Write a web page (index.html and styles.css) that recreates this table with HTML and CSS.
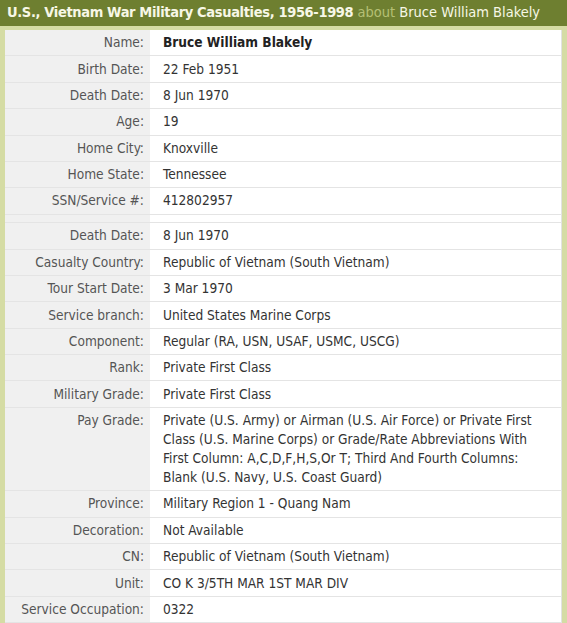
FILE: index.html
```html
<!DOCTYPE html>
<html>
<head>
<meta charset="utf-8">
<link rel="stylesheet" href="styles.css">
</head>
<body>
<div class="page">
  <h1 class="title"><span class="coll">U.S., Vietnam War Military Casualties, 1956-1998</span> <span class="about">about</span> <span class="person">Bruce William Blakely</span></h1>
  <div class="frame">
    <table class="rec">
      <tr><th>Name:</th><td class="name">Bruce William Blakely</td></tr>
      <tr><th>Birth Date:</th><td>22 Feb 1951</td></tr>
      <tr><th>Death Date:</th><td>8 Jun 1970</td></tr>
      <tr><th>Age:</th><td>19</td></tr>
      <tr><th>Home City:</th><td>Knoxville</td></tr>
      <tr><th>Home State:</th><td>Tennessee</td></tr>
      <tr><th>SSN/Service #:</th><td>412802957</td></tr>
      <tr class="gap"><th></th><td></td></tr>
      <tr><th>Death Date:</th><td>8 Jun 1970</td></tr>
      <tr><th>Casualty Country:</th><td>Republic of Vietnam (South Vietnam)</td></tr>
      <tr><th>Tour Start Date:</th><td>3 Mar 1970</td></tr>
      <tr><th>Service branch:</th><td>United States Marine Corps</td></tr>
      <tr><th>Component:</th><td>Regular (RA, USN, USAF, USMC, USCG)</td></tr>
      <tr><th>Rank:</th><td>Private First Class</td></tr>
      <tr><th>Military Grade:</th><td>Private First Class</td></tr>
      <tr><th>Pay Grade:</th><td>Private (U.S. Army) or Airman (U.S. Air Force) or Private First Class (U.S. Marine Corps) or Grade/Rate Abbreviations With First Column: A,C,D,F,H,S,Or T; Third And Fourth Columns: Blank (U.S. Navy, U.S. Coast Guard)</td></tr>
      <tr><th>Province:</th><td>Military Region 1 - Quang Nam</td></tr>
      <tr><th>Decoration:</th><td>Not Available</td></tr>
      <tr><th>CN:</th><td>Republic of Vietnam (South Vietnam)</td></tr>
      <tr><th>Unit:</th><td>CO K 3/5TH MAR 1ST MAR DIV</td></tr>
      <tr><th>Service Occupation:</th><td>0322</td></tr>
    </table>
  </div>
</div>
</body>
</html>
```
FILE: styles.css
```css
html, body {
  margin: 0;
  padding: 0;
  background: #d5dca4;
}
body {
  font-family: "DejaVu Sans Condensed", "DejaVu Sans", sans-serif;
  font-size: 13.6px;
  color: #333;
  overflow: hidden;
}
.page {
  width: 567px;
}
.title {
  margin: 0;
  background: #6e7f30;
  height: 26px;
  line-height: 25px;
  padding: 0 7px;
  font-size: 14.5px;
  font-weight: normal;
  color: #f7f7e6;
  white-space: nowrap;
}
.coll {
  font-weight: bold;
  letter-spacing: -0.35px;
}
.about {
  color: #b5c075;
}
.frame {
  padding: 4px 5px 0 5px;
}
.rec {
  width: 100%;
  border-collapse: collapse;
  background: #fff;
  border-right: 1px solid #e2e2e2;
}
.rec th {
  width: 132px;
  background: #f0f0f0;
  color: #555;
  font-weight: normal;
  text-align: right;
  padding: 3.2px 6px 3.2px 7px;
  line-height: 19px;
  vertical-align: top;
  border-bottom: 1px solid #e4e4e4;
  white-space: nowrap;
}
.rec td {
  padding: 3.2px 19px 3.2px 13px;
  line-height: 19px;
  vertical-align: top;
  border-bottom: 1px solid #e4e4e4;
  color: #333;
}
.rec td.name {
  font-weight: bold;
  color: #222;
}
.rec tr.gap th, .rec tr.gap td {
  padding: 0;
  height: 7.6px;
  line-height: 0;
}
```
